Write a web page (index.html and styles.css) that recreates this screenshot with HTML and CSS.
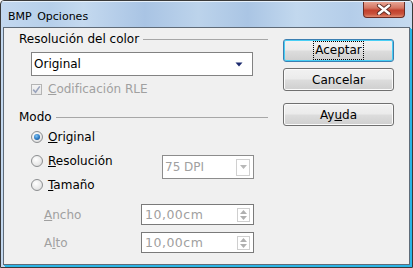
FILE: index.html
```html
<!DOCTYPE html>
<html lang="es">
<head>
    <meta charset="UTF-8">
    <title>BMP Opciones</title>
    <link rel="stylesheet" href="styles.css">
</head>
<body>
    <div class="window">
        <div class="titlebar">
            <span class="title">BMP Opciones</span>
            <div class="close">
                <svg width="16" height="11" viewBox="0 0 16 11">
                    <path d="M3 1.5 L13 9.5 M13 1.5 L3 9.5" stroke="#5a2a22" stroke-width="4.2" stroke-linecap="round"/>
                    <path d="M3 1.5 L13 9.5 M13 1.5 L3 9.5" stroke="#fff" stroke-width="2.4" stroke-linecap="round"/>
                </svg>
            </div>
        </div>
        <div class="client">
            <div class="options">
                <div class="group-title"><span>Resolución del color</span><i class="rule"></i></div>
                <div class="combo color-combo">
                    <span class="combo-text">Original</span>
                    <span class="combo-arrow">
                        <svg width="8" height="5" viewBox="0 0 8 5"><path d="M0.5 0.5 H7.5 L4 4.5 Z" fill="#1b2a6e"/></svg>
                    </span>
                </div>
                <div class="check disabled">
                    <span class="check-box">
                        <svg width="9" height="9" viewBox="0 0 9 9"><path d="M1.2 4.6 L3.6 7.2 L7.8 1.4" stroke="#9aa4bd" stroke-width="1.6" fill="none"/></svg>
                    </span>
                    <span><u>C</u>odificación RLE</span>
                </div>

                <div class="group-title mode-title"><span>Modo</span><i class="rule"></i></div>
                <div class="radio-row">
                    <span class="radio checked"></span>
                    <span><u>O</u>riginal</span>
                </div>
                <div class="radio-row">
                    <span class="radio"></span>
                    <span><u>R</u>esolución</span>
                    <div class="combo dpi-combo disabled">
                        <span class="combo-text">75 DPI</span>
                        <span class="combo-button">
                            <svg width="7" height="4" viewBox="0 0 7 4"><path d="M0 0 H7 L3.5 4 Z" fill="#b8b8b8"/></svg>
                        </span>
                    </div>
                </div>
                <div class="radio-row">
                    <span class="radio"></span>
                    <span><u>T</u>amaño</span>
                </div>
                <div class="size-row">
                    <span class="size-label"><u>A</u>ncho</span>
                    <div class="spin">
                        <span class="spin-text">10,00cm</span>
                        <span class="spin-buttons">
                            <svg width="7" height="4" viewBox="0 0 7 4"><path d="M0 4 H7 L3.5 0 Z" fill="#b0b0b0"/></svg>
                            <svg width="7" height="4" viewBox="0 0 7 4"><path d="M0 0 H7 L3.5 4 Z" fill="#b0b0b0"/></svg>
                        </span>
                    </div>
                </div>
                <div class="size-row">
                    <span class="size-label">A<u>l</u>to</span>
                    <div class="spin">
                        <span class="spin-text">10,00cm</span>
                        <span class="spin-buttons">
                            <svg width="7" height="4" viewBox="0 0 7 4"><path d="M0 4 H7 L3.5 0 Z" fill="#b0b0b0"/></svg>
                            <svg width="7" height="4" viewBox="0 0 7 4"><path d="M0 0 H7 L3.5 4 Z" fill="#b0b0b0"/></svg>
                        </span>
                    </div>
                </div>
            </div>

            <div class="buttons">
                <button class="btn default"><span class="focus">Aceptar</span></button>
                <button class="btn">Cancelar</button>
                <button class="btn help">Ay<u>u</u>da</button>
            </div>
        </div>
    </div>
</body>
</html>
```

FILE: styles.css
```css
body {
    margin: 0;
    font-family: "DejaVu Sans", Verdana, sans-serif;
    font-size: 12px;
    color: #000;
    background: #fff;
}
.window {
    width: 413px;
    height: 268px;
    box-sizing: border-box;
    border: 1px solid #3a3a3a;
    border-radius: 4px 4px 0 0;
    background: linear-gradient(90deg, #c3d8ef 0%, #b6cfea 12%, #c4d9ef 20%, #a9c4e4 35%, #bcd3eb 48%, #aac5e4 60%, #c2d8ee 72%, #b4cde9 85%, #c6dbf0 100%);
    display: flex;
    flex-direction: column;
    overflow: hidden;
}
.titlebar {
    height: 26px;
    display: flex;
    align-items: flex-start;
    justify-content: space-between;
    padding: 0 7px 0 7px;
    box-shadow: inset 0 1px 0 #e6f0fa;
}
.title {
    font-size: 11px;
    line-height: 13px;
    margin-top: 9px;
    word-spacing: 2px;
}
.close {
    width: 42px;
    height: 16px;
    margin-top: 1px;
    box-sizing: border-box;
    border: 1px solid #6b2c24;
    border-top: none;
    border-radius: 0 0 4px 4px;
    background: linear-gradient(#e7a493 0%, #d57662 40%, #c2412d 55%, #c9523c 80%, #e08a6f 100%);
    display: flex;
    align-items: center;
    justify-content: center;
}
.client {
    flex: 1;
    margin: 0 2px 2px 2px;
    border: 1px solid #5f6b78;
    background: #f0f0f0;
    display: flex;
    box-shadow: 1px 1px 0 #2bb5e6, 2px 2px 0 #2bb5e6;
}
.options {
    width: 265px;
    box-sizing: border-box;
    padding: 0 1px 0 15px;
    display: flex;
    flex-direction: column;
}
.group-title {
    display: flex;
    align-items: center;
    line-height: 15px;
    margin-top: 4px;
}
.group-title .rule {
    flex: 1;
    height: 1px;
    margin-left: 4px;
    background: #a7a7a7;
}
.mode-title {
    margin-top: 13px;
}
.combo {
    height: 24px;
    box-sizing: border-box;
    border: 1px solid #828282;
    background: #fff;
    display: flex;
    align-items: center;
}
.combo-text {
    flex: 1;
    padding-left: 2px;
}
.color-combo {
    width: 222px;
    margin: 5px 0 0 12px;
}
.combo-arrow {
    width: 20px;
    display: flex;
    justify-content: center;
    padding-right: 3px;
}
.check {
    display: flex;
    align-items: center;
    line-height: 15px;
    margin: 6px 0 0 12px;
}
.disabled, .size-row, .spin-text {
    color: #a0a0a0;
}
.check-box {
    width: 11px;
    height: 11px;
    box-sizing: border-box;
    border: 1px solid #b4b4b4;
    background: linear-gradient(#f4f4f4, #e6e6e6);
    margin-right: 6px;
    display: flex;
    align-items: center;
    justify-content: center;
}
.radio-row {
    height: 24px;
    display: flex;
    align-items: center;
    padding-left: 12px;
}
.radio {
    width: 12px;
    height: 12px;
    box-sizing: border-box;
    border-radius: 50%;
    border: 1px solid #8c8e90;
    background: radial-gradient(circle at 40% 35%, #ffffff 0%, #e8e8e8 60%, #d0d0d0 100%);
    margin-right: 5px;
    position: relative;
}
.radio.checked::after {
    content: "";
    position: absolute;
    left: 2px;
    top: 2px;
    width: 6px;
    height: 6px;
    border-radius: 50%;
    background: radial-gradient(circle at 40% 35%, #7fc4f5 0%, #2a77c0 55%, #173f78 100%);
}
.dpi-combo {
    width: 92px;
    margin: 12px 14px 0 auto;
    border-color: #8c8c8c;
}
.combo-button {
    width: 14px;
    height: 17px;
    box-sizing: border-box;
    border: 1px solid #d0d0d0;
    margin-right: 3px;
    display: flex;
    align-items: center;
    justify-content: center;
}
.size-row {
    display: flex;
    align-items: center;
    padding-left: 25px;
    margin-top: 7px;
}
.size-label {
    width: 97px;
}
.spin {
    width: 113px;
    height: 21px;
    box-sizing: border-box;
    border: 1px solid #7a7a7a;
    background: #fff;
    display: flex;
    align-items: center;
}
.spin-text {
    flex: 1;
    padding-left: 3px;
    font-size: 12.5px;
    letter-spacing: 0.5px;
}
.spin-buttons {
    width: 13px;
    height: 14px;
    box-sizing: border-box;
    border: 1px solid #cfcfcf;
    margin-right: 3px;
    display: flex;
    flex-direction: column;
    align-items: center;
    justify-content: space-around;
}
.buttons {
    width: 111px;
    margin-left: 14px;
    display: flex;
    flex-direction: column;
}
.btn {
    height: 23px;
    margin-top: 6px;
    padding: 0;
    font-family: inherit;
    font-size: 12px;
    color: #000;
    border: 1px solid #707070;
    border-radius: 3px;
    background: linear-gradient(#f2f2f2 0%, #ebebeb 48%, #dddddd 52%, #cfcfcf 100%);
    box-shadow: inset 0 0 0 1px #fbfbfb;
}
.btn.default {
    margin-top: 11px;
    border-color: #3c7fb1;
    box-shadow: inset 0 0 0 1px #48cff5;
}
.btn.help {
    margin-top: 12px;
}
.focus {
    display: inline-block;
    line-height: 17px;
    padding: 0 1px;
    outline: 1px dotted #000;
}
```
